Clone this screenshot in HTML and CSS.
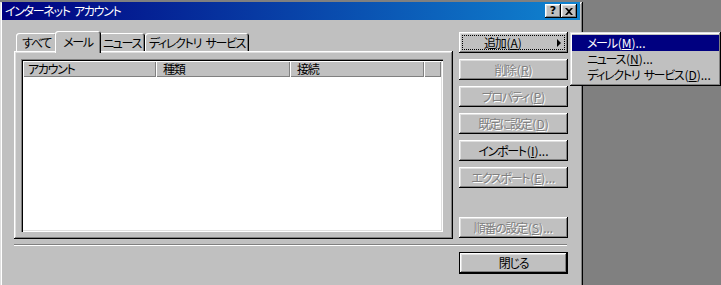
FILE: index.html
```html
<!DOCTYPE html>
<html lang="ja">
<head>
  <meta charset="UTF-8" />
  <title>インターネット アカウント</title>
  <link rel="stylesheet" href="styles.css">
</head>
<body>
  <div class="dialog">
    <div class="titlebar">
      <span class="title">インターネット アカウント</span>
      <div class="caption-btns">
        <span class="cap-btn help">?</span>
        <span class="cap-btn close">
          <svg width="8" height="7" viewBox="0 0 8 7"><path d="M0 0h2l2 2 2-2h2L5 3.5 8 7H6L4 5 2 7H0l3-3.5z" fill="#000"/></svg>
        </span>
      </div>
    </div>

    <div class="main">
      <div class="left">
        <div class="tabs">
          <div class="tab tab-all">すべて</div>
          <div class="tab tab-mail active">メール</div>
          <div class="tab tab-news">ニュース</div>
          <div class="tab tab-dir">ディレクトリ サービス</div>
        </div>
        <div class="panel">
          <div class="list">
            <div class="list-head">
              <div class="col col-account">アカウント</div>
              <div class="col col-type">種類</div>
              <div class="col col-conn">接続</div>
              <div class="col col-rest"></div>
            </div>
            <div class="list-body"></div>
          </div>
        </div>
      </div>

      <div class="buttons">
        <button class="btn btn-add"><span class="label">追加<span class="key">(<u>A</u>)</span></span><span class="arrow"></span></button>
        <button class="btn" disabled>削除<span class="key">(<u>R</u>)</span></button>
        <button class="btn" disabled>プロパティ<span class="key">(<u>P</u>)</span></button>
        <button class="btn" disabled>既定に設定<span class="key">(<u>D</u>)</span></button>
        <button class="btn">インポート<span class="key">(<u>I</u>)...</span></button>
        <button class="btn" disabled>エクスポート<span class="key">(<u>E</u>)...</span></button>
        <button class="btn btn-order" disabled>順番の設定<span class="key">(<u>S</u>)...</span></button>
      </div>
    </div>

    <div class="separator"></div>

    <div class="footer">
      <button class="btn btn-default">閉じる</button>
    </div>
  </div>

  <div class="menu">
    <div class="menu-item selected">メール<span class="key">(<u>M</u>)...</span></div>
    <div class="menu-item">ニュース<span class="key">(<u>N</u>)...</span></div>
    <div class="menu-item">ディレクトリ サービス<span class="key">(<u>D</u>)...</span></div>
  </div>
</body>
</html>
```

FILE: styles.css
```css
body {
  margin: 0;
  background: #808080;
  font-family: "Noto Sans CJK JP", sans-serif;
  font-size: 12px;
  letter-spacing: -1.3px;
  word-spacing: 3px;
  line-height: 16px;
  font-feature-settings: "palt";
  color: #000;
  overflow: hidden;
  white-space: nowrap;
}
.key {
  letter-spacing: 0;
  margin-left: 1px;
}
.dialog {
  width: 583px;
  height: 285px;
  box-sizing: border-box;
  background: #c0c0c0;
  box-shadow: inset -1px -1px #000, inset 1px 1px #dfdfdf, inset -2px -2px #808080, inset 2px 2px #fff;
}
.titlebar {
  margin: 2px 3px 0 2px;
  height: 18px;
  display: flex;
  align-items: center;
  justify-content: space-between;
  background: linear-gradient(to right, #000080, #1084d0);
  padding: 0 3px 0 3px;
}
.title {
  color: #fff;
}
.caption-btns {
  display: flex;
}
.cap-btn {
  width: 16px;
  height: 14px;
  box-sizing: border-box;
  background: #c0c0c0;
  box-shadow: inset -1px -1px #000, inset 1px 1px #fff, inset -2px -2px #808080, inset 2px 2px #dfdfdf;
  display: flex;
  align-items: center;
  justify-content: center;
}
.help {
  font-family: "DejaVu Sans", sans-serif;
  font-weight: bold;
  font-size: 11px;
  letter-spacing: 0;
  line-height: 14px;
}

.main {
  display: flex;
  margin: 11px 0 0 14px;
}
.left {
  width: 439px;
}
.tabs {
  display: flex;
  align-items: flex-end;
  height: 20px;
  padding-left: 2px;
}
.tab {
  height: 18px;
  box-sizing: border-box;
  text-align: center;
  line-height: 19px;
  border-radius: 3px 3px 0 0;
  box-shadow: inset 1px 1px #fff, inset -1px 0 #000, inset -2px 0 #808080;
}
.tab-all { width: 41px; }
.tab-news { width: 46px; }
.tab-dir { width: 104px; }
.tab.active {
  width: 46px;
  height: 22px;
  margin: 0 -2px -2px;
  padding-bottom: 2px;
  line-height: 21px;
  position: relative;
  z-index: 1;
  background: #c0c0c0;
}
.panel {
  height: 188px;
  box-sizing: border-box;
  display: flex;
  padding: 8px 10px 7px 7px;
  box-shadow: inset -1px -1px #000, inset 1px 1px #fff, inset -2px -2px #808080, inset 2px 2px #dfdfdf;
}
.list {
  flex: 1;
  display: flex;
  flex-direction: column;
  background: #fff;
  padding: 2px;
  box-shadow: inset 1px 1px #808080, inset 2px 2px #000, inset -1px -1px #fff, inset -2px -2px #dfdfdf;
}
.list-head {
  display: flex;
  height: 16px;
}
.col {
  box-sizing: border-box;
  padding-left: 5px;
  background: #c0c0c0;
  line-height: 16px;
  box-shadow: inset 1px 1px #fff, inset -1px -1px #808080;
}
.col-account { width: 133px; }
.col-type { width: 134px; padding-left: 7px; }
.col-conn { width: 134px; padding-left: 7px; }
.col-rest { flex: 1; }
.list-body {
  flex: 1;
}

.buttons {
  width: 109px;
  margin-left: 6px;
  display: flex;
  flex-direction: column;
}
.btn {
  width: 109px;
  height: 21px;
  margin-top: 6px;
  padding: 0;
  border: 0;
  background: #c0c0c0;
  font: inherit;
  letter-spacing: inherit;
  word-spacing: inherit;
  line-height: 16px;
  color: #000;
  box-shadow: inset -1px -1px #000, inset 1px 1px #fff, inset -2px -2px #808080, inset 2px 2px #dfdfdf;
}
.btn:disabled {
  color: #808080;
  text-shadow: 1px 1px 0 #fff;
}
.btn-add {
  margin-top: 1px;
  display: flex;
  align-items: center;
  padding-right: 7px;
  outline: 1px dotted #000;
  outline-offset: -4px;
}
.btn-add .label {
  flex: 1;
  text-align: center;
  padding-right: 10px;
}
.arrow {
  width: 0;
  height: 0;
  border-top: 4px solid transparent;
  border-bottom: 4px solid transparent;
  border-left: 4px solid #000;
}
.btn-order {
  margin-top: auto;
  margin-bottom: 1px;
}
.separator {
  width: 553px;
  margin: 5px 0 0 14px;
  border-top: 1px solid #808080;
  border-bottom: 1px solid #fff;
}
.footer {
  padding-left: 459px;
  margin-top: 6px;
}
.btn-default {
  height: 22px;
  margin-top: 0;
  border: 1px solid #000;
}

.menu {
  position: absolute;
  left: 570px;
  top: 32px;
  width: 151px;
  height: 54px;
  box-sizing: border-box;
  padding: 3px 2px;
  background: #c0c0c0;
  box-shadow: inset -1px -1px #000, inset 1px 1px #dfdfdf, inset -2px -2px #808080, inset 2px 2px #fff;
}
.menu-item {
  height: 16px;
  padding-left: 15px;
}
.menu-item.selected {
  background: #000080;
  color: #fff;
}
```
